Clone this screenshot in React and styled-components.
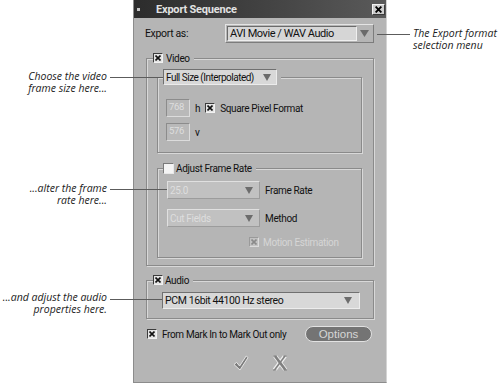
import React from 'react';
import styled, { createGlobalStyle } from 'styled-components';

const UI_FONT = `Roboto, "Liberation Sans", Arial, sans-serif`;
const NOTE_FONT = `"Open Sans", "Noto Sans", sans-serif`;
const PANEL = '#b5b5b5';

const GlobalStyle = createGlobalStyle`
  html, body { margin: 0; padding: 0; background: #fff; }
  * { box-sizing: border-box; }
`;

const Stage = styled.div`
  position: relative;
  width: 500px;
  height: 387px;
  overflow: hidden;
  background: #fff;
`;

const Dialog = styled.div`
  margin-left: 133px;
  width: 254px;
  height: 383px;
  background: ${PANEL};
  border: 1px solid #8c8c8c;
  border-top: none;
  border-right-color: #d4d4d4;
  display: flex;
  flex-direction: column;
  font-family: ${UI_FONT};
  font-size: 10px;
  letter-spacing: -0.35px;
  color: #111;
`;

const TitleBar = styled.div`
  height: 18px;
  flex: none;
  display: flex;
  align-items: center;
  padding: 0 1px 0 3px;
  background: linear-gradient(90deg, #2c2c2c 0%, #444 55%, #5a5a5a 100%);
`;

const Grip = styled.span`
  width: 3px;
  height: 3px;
  background: #c4c4c4;
  margin-right: 16px;
`;

const Title = styled.span`
  font-weight: bold;
  font-size: 11px;
  letter-spacing: -0.2px;
  color: #e2e2e2;
`;

const CloseBtn = styled.div`
  margin-left: auto;
  width: 13px;
  height: 11px;
  background: #cdcdcd;
  border: 1px solid;
  border-color: #f2f2f2 #3a3a3a #3a3a3a #f2f2f2;
  display: flex;
  align-items: center;
  justify-content: center;
`;

const Body = styled.div`
  flex: 1;
  display: flex;
  flex-direction: column;
  padding: 6px 12px 0 12px;
`;

const ExportRow = styled.div`
  display: flex;
  align-items: center;
  height: 19px;
`;

const ExportLabel = styled.span`
  width: 80px;
  margin-left: -1px;
  font-size: 10.5px;
`;

const FormatSelect = styled.div`
  flex: 1;
  height: 19px;
  display: flex;
  align-items: center;
  padding: 1px 4px 1px 1px;
  border: 1px solid;
  border-color: #e4e4e4 #7c7c7c #7c7c7c #e4e4e4;
`;

const FormatField = styled.div`
  flex: 1;
  height: 100%;
  display: flex;
  align-items: center;
  padding-left: 2px;
  margin-right: 3px;
  background: #d6d6d6;
  border: 1px solid;
  border-color: #6a6a6a #efefef #efefef #6a6a6a;
  font-size: 11px;
  letter-spacing: -0.45px;
`;

const Group = styled.fieldset`
  margin: ${(p) => p.$mt || 0}px 0 0 0;
  padding: 0;
  border: 1px solid #8a8a8a;
  box-shadow: inset 1px 1px 0 #d8d8d8, 1px 1px 0 #d8d8d8;
  min-width: 0;
`;

const Legend = styled.legend`
  margin-left: ${(p) => p.$ml}px;
  padding: 0 4px 0 0;
  background: ${PANEL};
`;

const LegendInner = styled.div`
  height: ${(p) => p.$h || 12}px;
  display: flex;
  align-items: center;
  gap: ${(p) => p.$gap ?? 3}px;
`;

const GroupBody = styled.div`
  display: flex;
  flex-direction: column;
  gap: ${(p) => p.$gap || 0}px;
  padding: ${(p) => p.$pad};
`;

const Row = styled.div`
  display: flex;
  align-items: center;
  height: ${(p) => p.$h || 18}px;
  gap: ${(p) => p.$gap || 5}px;
  padding-left: ${(p) => p.$indent || 0}px;
  margin-top: ${(p) => p.$mt || 0}px;
`;

const SelectBox = styled.div`
  width: ${(p) => (p.$w ? `${p.$w}px` : 'auto')};
  flex: ${(p) => (p.$w ? 'none' : '1')};
  height: ${(p) => p.$h}px;
  display: flex;
  align-items: center;
  padding: 0 ${(p) => p.$pr || 6}px 0 2px;
  background: ${(p) => (p.$disabled ? '#c1c1c1' : '#d8d8d8')};
  border: 1px solid;
  border-color: ${(p) =>
    p.$disabled ? '#e0e0e0 #9c9c9c #9c9c9c #e0e0e0' : '#707070 #ececec #ececec #707070'};
  color: ${(p) => (p.$disabled ? '#dedede' : '#111')};
  font-size: ${(p) => p.$fs || 10}px;
  letter-spacing: ${(p) => p.$ls ?? -0.35}px;
  white-space: nowrap;
`;

const SelectText = styled.span`
  flex: 1;
`;

const NumField = styled.div`
  width: 24px;
  height: 18px;
  display: flex;
  align-items: flex-start;
  padding: 1px 0 0 2px;
  background: #b9b9b9;
  border: 1px solid;
  border-color: #8c8c8c #dcdcdc #dcdcdc #8c8c8c;
  color: #dedede;
  font-size: 9.5px;
`;

const Label = styled.span`
  color: ${(p) => (p.$disabled ? '#d6d6d6' : '#111')};
  white-space: nowrap;
`;

const Box = styled.span`
  flex: none;
  width: ${(p) => p.$size}px;
  height: ${(p) => p.$size}px;
  display: inline-flex;
  align-items: center;
  justify-content: center;
  border: 1px solid;
  border-color: ${(p) =>
    p.$disabled
      ? '#9a9a9a #dcdcdc #dcdcdc #9a9a9a'
      : p.$blank
      ? '#7a7a7a #e8e8e8 #e8e8e8 #7a7a7a'
      : '#3c3c3c #f2f2f2 #f2f2f2 #3c3c3c'};
  background: ${(p) => (p.$blank ? '#f4f4f4' : p.$disabled ? '#c2c2c2' : '#e4e4e4')};
`;

const BottomRow = styled.div`
  display: flex;
  align-items: center;
  height: 16px;
  margin-top: 7px;
  gap: 5px;
  padding-left: 1px;
`;

const OptionsButton = styled.button`
  margin-left: auto;
  margin-right: 2px;
  width: 67px;
  height: 16px;
  padding: 0;
  border-radius: 8px;
  background: #747474;
  border: 1px solid #e2e2e2;
  color: #d6d6d6;
  font-family: "Liberation Sans", Arial, sans-serif;
  font-size: 11.5px;
  line-height: 14px;
`;

const Actions = styled.div`
  display: flex;
  justify-content: center;
  align-items: center;
  gap: 24px;
  margin-top: 13px;
  height: 16px;
`;

const Note = styled.div`
  position: absolute;
  top: ${(p) => p.$top}px;
  ${(p) => (p.$right != null ? `right: ${500 - p.$right}px; text-align: right;` : `left: ${p.$left}px;`)}
  font-family: ${NOTE_FONT};
  font-style: italic;
  font-size: 10.5px;
  line-height: 12px;
  color: #1c1c1c;
  white-space: nowrap;
`;

const Leader = styled.div`
  position: absolute;
  top: ${(p) => p.$y}px;
  left: ${(p) => p.$x1}px;
  width: ${(p) => p.$x2 - p.$x1}px;
  height: 1px;
  background: #5c5c5c;
`;

const Arrow = ({ color = '#6c6c6c', w = 8, h = 7 }) => (
  <svg width={w} height={h} viewBox={`0 0 ${w} ${h}`} style={{ flex: 'none' }}>
    <path d={`M0 0H${w}L${w / 2} ${h}Z`} fill={color} />
  </svg>
);

const XMark = ({ color = '#111', s = 6 }) => (
  <svg width={s} height={s} viewBox="0 0 6 6">
    <path d="M0.5 0.5L5.5 5.5M5.5 0.5L0.5 5.5" stroke={color} strokeWidth="1.6" />
  </svg>
);

const Check = ({ checked = true, blank, disabled, size = 10 }) => (
  <Box $size={size} $blank={blank} $disabled={disabled}>
    {checked && !blank && <XMark color={disabled ? '#8a8a8a' : '#111'} s={size - 4} />}
  </Box>
);

const OkIcon = () => (
  <svg width="16" height="16" viewBox="0 0 16 16">
    <path
      d="M1 9.5L3.6 7.4L6.6 11L13.2 1L15 2.6L7 15Z"
      fill="#7c7c7c"
      stroke="#ececec"
      strokeWidth="0.9"
      strokeLinejoin="round"
    />
  </svg>
);

const CancelIcon = () => (
  <svg width="14" height="16" viewBox="0 0 14 16">
    <path d="M2 1L12.5 15M12 1L1.5 15" stroke="#efefef" strokeWidth="4.2" />
    <path d="M2 1L12.5 15" stroke="#808080" strokeWidth="2.6" />
    <path d="M12 1L1.5 15" stroke="#808080" strokeWidth="1.6" />
    <path d="M0.5 1H4M10 1H13.5M0 15H3.5M10.5 15H14" stroke="#808080" strokeWidth="1" />
  </svg>
);

export default function App() {
  return (
    <Stage>
      <GlobalStyle />
      <Dialog>
        <TitleBar>
          <Grip />
          <Title>Export Sequence</Title>
          <CloseBtn>
            <XMark color="#000" s={7} />
          </CloseBtn>
        </TitleBar>
        <Body>
          <ExportRow>
            <ExportLabel>Export as:</ExportLabel>
            <FormatSelect>
              <FormatField>AVI Movie / WAV Audio</FormatField>
              <Arrow w={9} h={7} color="#6a6a6a" />
            </FormatSelect>
          </ExportRow>

          <Group $mt={9}>
            <Legend $ml={6}>
              <LegendInner>
                <Check />
                <Label>Video</Label>
              </LegendInner>
            </Legend>
            <GroupBody $pad="5px 11px 7px 10px">
              <Group>
                <Legend $ml={5}>
                  <LegendInner $h={16}>
                    <SelectBox $w={114} $h={16} $pr={5} $ls={-0.5}>
                      <SelectText>Full Size (Interpolated)</SelectText>
                      <Arrow />
                    </SelectBox>
                  </LegendInner>
                </Legend>
                <GroupBody $pad="14px 8px 11px 8px" $gap={6}>
                  <Row $gap={5}>
                    <NumField>768</NumField>
                    <Label>h</Label>
                    <Check size={10} />
                    <Label>Square Pixel Format</Label>
                  </Row>
                  <Row $gap={5}>
                    <NumField>576</NumField>
                    <Label>v</Label>
                  </Row>
                </GroupBody>
              </Group>

              <Group $mt={9}>
                <Legend $ml={5}>
                  <LegendInner $gap={2}>
                    <Check blank size={11} />
                    <Label>Adjust Frame Rate</Label>
                  </LegendInner>
                </Legend>
                <GroupBody $pad="7px 8px 9px 9px">
                  <Row>
                    <SelectBox $w={93} $h={18} $disabled>
                      <SelectText>25.0</SelectText>
                      <Arrow />
                    </SelectBox>
                    <Label>Frame Rate</Label>
                  </Row>
                  <Row $mt={10}>
                    <SelectBox $w={93} $h={18} $disabled>
                      <SelectText>Cut Fields</SelectText>
                      <Arrow />
                    </SelectBox>
                    <Label>Method</Label>
                  </Row>
                  <Row $mt={9} $h={12} $indent={82} $gap={4}>
                    <Check disabled size={10} />
                    <Label $disabled>Motion Estimation</Label>
                  </Row>
                </GroupBody>
              </Group>
            </GroupBody>
          </Group>

          <Group $mt={8}>
            <Legend $ml={6}>
              <LegendInner $gap={2}>
                <Check />
                <Label>Audio</Label>
              </LegendInner>
            </Legend>
            <GroupBody $pad="6px 13px 9px 15px">
              <Row $h={17}>
                <SelectBox $h={17} $pr={7} $fs={10.5} $ls={-0.4}>
                  <SelectText>PCM 16bit 44100 Hz stereo</SelectText>
                  <Arrow />
                </SelectBox>
              </Row>
            </GroupBody>
          </Group>

          <BottomRow>
            <Check />
            <Label>From Mark In to Mark Out only</Label>
            <OptionsButton>Options</OptionsButton>
          </BottomRow>

          <Actions>
            <OkIcon />
            <CancelIcon />
          </Actions>
        </Body>
      </Dialog>

      <Note $left={413} $top={27}>
        The Export format
        <br />
        selection menu
      </Note>
      <Leader $y={34} $x1={377} $x2={410} />

      <Note $right={107} $top={70}>
        Choose the video
        <br />
        frame size here...
      </Note>
      <Leader $y={77} $x1={110} $x2={163} />

      <Note $right={107} $top={182}>
        ...alter the frame
        <br />
        rate here...
      </Note>
      <Leader $y={189} $x1={110} $x2={167} />

      <Note $right={107} $top={291}>
        ...and adjust the audio
        <br />
        properties here.
      </Note>
      <Leader $y={299} $x1={110} $x2={162} />
    </Stage>
  );
}
